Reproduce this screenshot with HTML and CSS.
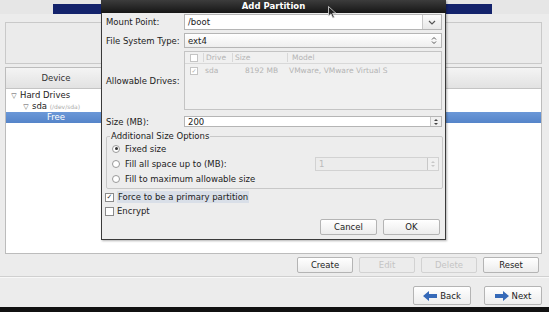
FILE: index.html
```html
<!DOCTYPE html>
<html lang="en">
<head>
    <meta charset="UTF-8">
    <title>Add Partition</title>
    <link rel="stylesheet" href="styles.css">
</head>
<body>
    <div class="screen">
        <div class="topstrip"><div class="banner"></div></div>
        <div class="infobox"></div>

        <div class="devtree">
            <div class="devtree-head">
                <div class="col-device">Device</div>
                <div class="col-rest"></div>
            </div>
            <div class="devtree-body">
                <div class="node lvl0"><span class="expander">▽</span>Hard Drives</div>
                <div class="node lvl1"><span class="expander">▽</span>sda <span class="devpath">(/dev/sda)</span></div>
                <div class="node selected"><span class="free">Free</span></div>
            </div>
        </div>

        <div class="actions">
            <button class="btn">Create</button>
            <button class="btn" disabled>Edit</button>
            <button class="btn" disabled>Delete</button>
            <button class="btn">Reset</button>
        </div>
        <div class="separator"></div>
        <div class="nav">
            <button class="btn btn-nav">
                <svg width="14" height="10" viewBox="0 0 14 10"><path d="M0 5 L6 0 L6 3 L14 3 L14 7 L6 7 L6 10 Z" fill="#3569b8"/></svg>
                Back
            </button>
            <button class="btn btn-nav">
                <svg width="14" height="10" viewBox="0 0 14 10"><path d="M14 5 L8 0 L8 3 L0 3 L0 7 L8 7 L8 10 Z" fill="#3569b8"/></svg>
                Next
            </button>
        </div>
        <div class="bottombar"></div>
    </div>

    <!-- the dialog window floats over the installer screen -->
    <div class="dialog">
        <div class="titlebar">Add Partition</div>
        <div class="dialog-body">
            <div class="form">
                <label class="lbl">Mount Point:</label>
                <div class="field combo">
                    <span class="value">/boot</span>
                    <span class="drop">
                        <svg width="8" height="5" viewBox="0 0 8 5"><path d="M1 1 L4 4 L7 1" stroke="#555" stroke-width="1.2" fill="none"/></svg>
                    </span>
                </div>

                <label class="lbl">File System Type:</label>
                <div class="field select">
                    <span class="value">ext4</span>
                    <span class="updown">
                        <svg width="6" height="9" viewBox="0 0 6 9"><path d="M1 3.5 L3 1.5 L5 3.5 M1 5.5 L3 7.5 L5 5.5" stroke="#555" stroke-width="1" fill="none"/></svg>
                    </span>
                </div>

                <label class="lbl">Allowable Drives:</label>
                <div class="drives">
                    <div class="drives-head">
                        <span class="dc-check"><span class="cb small"></span></span>
                        <span class="dc-drive">Drive</span>
                        <span class="dc-size">Size</span>
                        <span class="dc-model">Model</span>
                    </div>
                    <div class="drives-row">
                        <span class="dc-check"><span class="cb small checked">✓</span></span>
                        <span class="dc-drive">sda</span>
                        <span class="dc-size">8192 MB</span>
                        <span class="dc-model">VMware, VMware Virtual S</span>
                    </div>
                </div>

                <label class="lbl">Size (MB):</label>
                <div class="field spin">
                    <span class="value">200</span>
                    <span class="spinbtn">
                        <svg width="6" height="10" viewBox="0 0 6 10"><path d="M1 4 L3 2 L5 4 Z M1 6 L3 8 L5 6 Z" fill="#444"/></svg>
                    </span>
                </div>
            </div>

            <fieldset class="sizeopts">
                <legend>Additional Size Options</legend>
                <div class="opt"><span class="radio on"></span>Fixed size</div>
                <div class="opt opt-fill">
                    <span class="radio"></span>Fill all space up to (MB):
                    <div class="field spin disabled">
                        <span class="value">1</span>
                        <span class="spinbtn">
                            <svg width="6" height="10" viewBox="0 0 6 10"><path d="M1 4 L3 2 L5 4 Z M1 6 L3 8 L5 6 Z" fill="#c8c8c8"/></svg>
                        </span>
                    </div>
                </div>
                <div class="opt"><span class="radio"></span>Fill to maximum allowable size</div>
            </fieldset>

            <div class="check first"><span class="cb checked">✓</span><span class="focus">Force to be a primary partition</span></div>
            <div class="check"><span class="cb"></span>Encrypt</div>

            <div class="dialog-buttons">
                <button class="btn">Cancel</button>
                <button class="btn">OK</button>
            </div>
        </div>
    </div>

    <svg class="cursor" width="9" height="13" viewBox="0 0 9 13"><path d="M0.5 0.5 L0.5 10 L3 7.8 L4.8 12 L6.3 11.3 L4.6 7.3 L8 7.3 Z" fill="#222" stroke="#ddd" stroke-width="0.8"/></svg>
</body>
</html>
```
FILE: styles.css
```css
body {
    margin: 0;
    width: 549px;
    height: 312px;
    overflow: hidden;
    background: #ececec;
    font-family: "DejaVu Sans", sans-serif;
    font-size: 8.5px;
    color: #222;
    position: relative;
}
.screen {
    display: flex;
    flex-direction: column;
    height: 312px;
}
.topstrip {
    height: 14px;
    padding-top: 4px;
    box-sizing: border-box;
    background: #e6e6e6;
}
.banner {
    margin-left: 53px;
    width: 439px;
    height: 10px;
    background: #14236c;
}
.infobox {
    margin: 8px 7px 0 5px;
    height: 40px;
    border: 1px solid #c9c9c9;
    background: #ebebeb;
}
.devtree {
    margin: 3px 7px 0 5px;
    height: 185px;
    border: 1px solid #bcbcbc;
    background: #fff;
    display: flex;
    flex-direction: column;
}
.devtree-head {
    display: flex;
    height: 20px;
    background: linear-gradient(#f4f4f4, #e2e2e2);
    border-bottom: 1px solid #c4c4c4;
}
.col-device {
    width: 100px;
    display: flex;
    align-items: center;
    justify-content: center;
    border-right: 1px solid #cfcfcf;
    color: #333;
}
.col-rest {
    flex: 1;
}
.devtree-body {
    padding-top: 1px;
}
.node {
    height: 11px;
    line-height: 11px;
    white-space: nowrap;
}
.lvl0 {
    padding-left: 2px;
}
.lvl1 {
    padding-left: 14px;
}
.expander {
    display: inline-block;
    width: 12px;
    font-size: 7px;
    color: #555;
    text-align: center;
}
.devpath {
    font-size: 6px;
    color: #aaa;
}
.selected {
    background: linear-gradient(#6b98d8, #5584c9);
    color: #fff;
}
.free {
    display: inline-block;
    width: 100px;
    text-align: center;
}
.actions {
    display: flex;
    justify-content: flex-end;
    gap: 6px;
    margin: 3px 10px 0 0;
}
.btn {
    font-family: inherit;
    font-size: 8.5px;
    color: #222;
    height: 16px;
    width: 56px;
    padding: 0;
    border: 1px solid #b4b4b4;
    border-radius: 2px;
    background: linear-gradient(#ffffff, #ececec);
    display: flex;
    align-items: center;
    justify-content: center;
    gap: 3px;
}
.btn:disabled {
    color: #c4c4c4;
    border-color: #d2d2d2;
    background: #ececec;
}
.separator {
    margin: 3px 0 0;
    height: 1px;
    background: #d0d0d0;
    border-bottom: 1px solid #f8f8f8;
}
.nav {
    display: flex;
    justify-content: flex-end;
    gap: 13px;
    margin: 8px 7px 0 0;
}
.btn-nav {
    width: 58px;
    height: 19px;
}
.bottombar {
    margin-top: auto;
    height: 5px;
    background: #111;
}

/* dialog window */
.dialog {
    position: absolute;
    left: 101px;
    top: 0;
    width: 345px;
    height: 240px;
    box-sizing: border-box;
    border: 1px solid #3a3a3a;
    border-top: none;
    background: #ededed;
    box-shadow: 1px 1px 2px rgba(0,0,0,0.3);
}
.titlebar {
    height: 13px;
    line-height: 13px;
    text-align: center;
    color: #fff;
    font-weight: bold;
    background: linear-gradient(#3c3c3c, #161616);
    margin: 0 -1px;
}
.dialog-body {
    padding: 1px 3px 0 4px;
}
.form {
    display: grid;
    grid-template-columns: 78px 258px;
    grid-template-rows: 16px 15px 59px 14px;
    row-gap: 3px;
}
.form > :nth-last-child(-n+2) {
    margin-top: 3px;
}
.lbl {
    display: flex;
    align-items: center;
    white-space: nowrap;
}
.field {
    display: flex;
    align-items: center;
    border: 1px solid #b5b5b5;
    background: #fff;
    box-sizing: border-box;
}
.value {
    flex: 1;
    padding-left: 3px;
}
.drop {
    width: 18px;
    height: 100%;
    display: flex;
    align-items: center;
    justify-content: center;
    border-left: 1px solid #c8c8c8;
    background: linear-gradient(#fafafa, #e8e8e8);
}
.select {
    background: linear-gradient(#ffffff, #eeeeee);
}
.updown {
    width: 14px;
    display: flex;
    justify-content: center;
}
.spin .spinbtn {
    width: 10px;
    height: 100%;
    display: flex;
    align-items: center;
    justify-content: center;
    border-left: 1px solid #c8c8c8;
    background: #f0f0f0;
}
.drives {
    border: 1px solid #c4c4c4;
    background: #f0f0f0;
    color: #b4b4b4;
    font-size: 7.5px;
}
.drives-head {
    display: flex;
    height: 11px;
    align-items: center;
    border-bottom: 1px solid #d8d8d8;
}
.drives-head > span + span {
    border-left: 1px solid #d8d8d8;
}
.drives-row {
    display: flex;
    height: 13px;
    align-items: center;
}
.dc-check {
    width: 18px;
    display: flex;
    justify-content: center;
}
.dc-drive {
    width: 26px;
    padding-left: 2px;
}
.dc-size {
    width: 52px;
    padding-left: 2px;
}
.drives-row .dc-size {
    padding-left: 14px;
    width: 40px;
}
.dc-model {
    flex: 1;
    padding-left: 4px;
    white-space: nowrap;
}
.cb {
    display: inline-flex;
    align-items: center;
    justify-content: center;
    width: 7px;
    height: 7px;
    border: 1px solid #8a8a8a;
    background: #fff;
    font-size: 7px;
    line-height: 1;
    color: #333;
}
.cb.small {
    width: 6px;
    height: 6px;
    border-color: #c4c4c4;
    color: #aaa;
    font-size: 6px;
}
.sizeopts {
    margin: 4px 0 0;
    padding: 0 0 2px 5px;
    width: 337px;
    box-sizing: border-box;
    border: 1px solid #c8c8c8;
    border-radius: 2px;
    display: flex;
    flex-direction: column;
}
.sizeopts legend {
    padding: 0 1px;
    margin-left: -2px;
    height: 10px;
    line-height: 10px;
}
.opt {
    display: flex;
    align-items: center;
    height: 15px;
}
.radio {
    width: 6px;
    height: 6px;
    border: 1px solid #999;
    border-radius: 50%;
    background: #fff;
    margin-right: 5px;
    position: relative;
}
.radio.on::after {
    content: "";
    position: absolute;
    left: 1.5px;
    top: 1.5px;
    width: 3px;
    height: 3px;
    border-radius: 50%;
    background: #333;
}
.opt-fill .field {
    margin-left: auto;
    margin-right: 3px;
    width: 124px;
    height: 14px;
}
.disabled {
    background: #ececec;
    color: #bbb;
    border-color: #d2d2d2;
}
.check {
    display: flex;
    align-items: center;
    height: 14px;
    margin-left: -1px;
}
.check.first {
    margin-top: 1px;
}
.check .cb {
    margin-right: 3px;
}
.focus {
    background: #d9dfe8;
    padding: 1px 1px;
}
.dialog-buttons {
    display: flex;
    justify-content: flex-end;
    gap: 6px;
    margin: 1px 2px 0 0;
}
.dialog-buttons .btn {
    width: 57px;
}
.cursor {
    position: absolute;
    left: 328px;
    top: 6px;
}
```
